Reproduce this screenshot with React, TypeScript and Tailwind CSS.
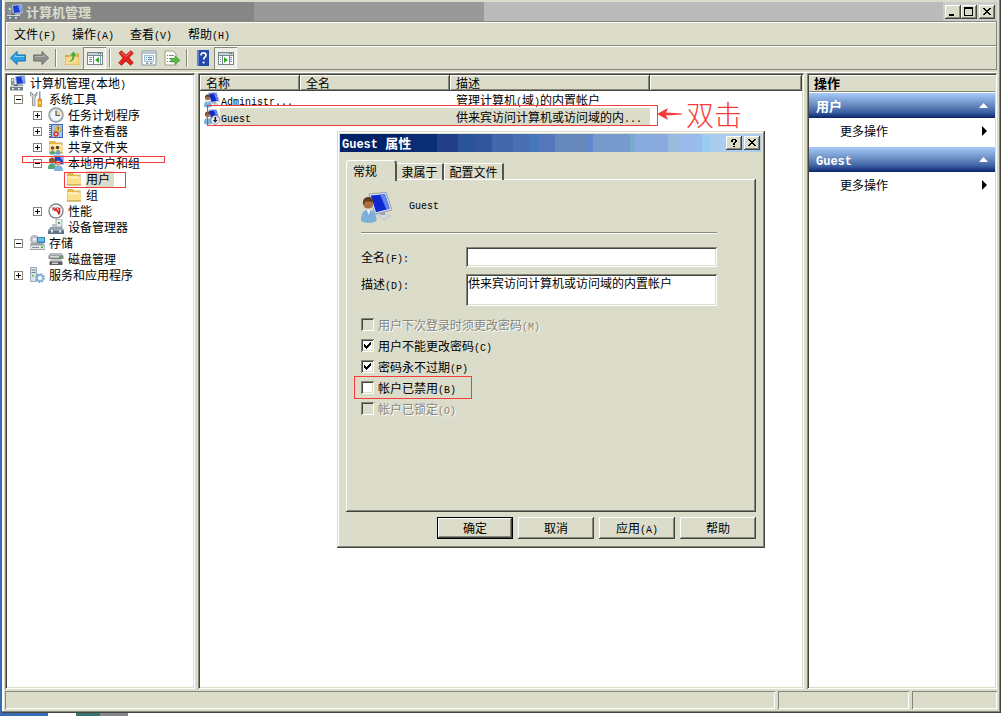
import type { ReactNode } from "react";

const sunken =
  "shadow-[inset_1px_1px_#868679,inset_-1px_-1px_#ffffff,inset_2px_2px_#45453f,inset_-2px_-2px_#dcdcca]";
const raised =
  "shadow-[inset_-1px_-1px_#45453f,inset_1px_1px_#ffffff,inset_-2px_-2px_#868679]";
const thinSunken = "shadow-[inset_1px_1px_#868679,inset_-1px_-1px_#ffffff]";

// Latin runs take half the width of a Chinese character, as in the system font
const T = ({ children, bold = false }: { children: string; bold?: boolean }) => (
  <>
    {children.split(/([\x20-\x7e]+)/).map((part, i) =>
      i % 2 === 1 ? (
        <span
          key={i}
          className={`leading-none whitespace-pre font-['Liberation_Mono','Noto_Sans_CJK_SC',monospace] ${
            bold ? "text-[12px]" : "text-[10px]"
          }`}
        >
          {part}
        </span>
      ) : (
        part
      )
    )}
  </>
);

const Icon = ({ children, className = "size-4" }: { children: ReactNode; className?: string }) => (
  <svg viewBox="0 0 16 16" className={`shrink-0 ${className}`} aria-hidden="true">
    {children}
  </svg>
);

const ComputerIcon = () => (
  <Icon>
    <path d="M5 1l10-1 .8 9L6 10.500z" fill="#b3bfd0" />
    <path d="M6 2l8-1 .7 7L7 9z" fill="#1b3fd0" />
    <path d="M11 1.400l3-.4.7 7-1.500.2z" fill="#7fa8f4" />
    <path d="M1 3h3.500v7.500H1z" fill="#8a949d" />
    <path d="M2 4h1.500v2H2z" fill="#e8eef2" />
    <path d="M8 9h4l2 2H7z" fill="#aab2bb" />
    <path d="M0 11h13v4.500H0z" fill="#6f7f8a" />
    <path d="M0 11h13v1H0z" fill="#d2dade" />
    <path d="M2 13h2v1.500H2zM8 13h2v1.500H8z" fill="#e9eef0" />
    <path d="M4 9.500h4V11H4z" fill="#55626c" />
  </Icon>
);

const ToolsIcon = () => (
  <Icon>
    <path
      d="M1.500 1v3l2 2v8.500h2.500V6l2-2V1L6.500 2.500v1.500h-3V2.500z"
      fill="#d8dcde"
      stroke="#7b8388"
      strokeWidth=".8"
    />
    <path d="M10 .5h1.500V8H10z" fill="#8c9498" />
    <path d="M9 8h3.500v7a1 1 0 0 1-1 1H10a1 1 0 0 1-1-1z" fill="#f1a81e" stroke="#b46c10" strokeWidth=".6" />
    <path d="M9.300 11h3v1.500h-3z" fill="#fce08a" />
  </Icon>
);

const ClockIcon = () => (
  <Icon>
    <circle cx="8" cy="8" r="7.700" fill="#8d949c" />
    <circle cx="8" cy="8" r="6.500" fill="#c8dbe9" />
    <circle cx="8" cy="8" r="5.300" fill="#f4f8fb" />
    <path d="M8 8V3a5 5 0 0 1 5 5z" fill="#f8d48e" />
    <path d="M8 3.500V8.500h4" fill="none" stroke="#3b5e86" strokeWidth="1.200" />
  </Icon>
);

const EventIcon = () => (
  <Icon>
    <path d="M3 1h12v14H3z" fill="#3b66b8" />
    <path d="M4 2h10v12H4z" fill="#a9c4ec" />
    <path d="M1 1h3v14H1z" fill="#5a6880" />
    <path d="M1 2h2v1H1zm0 2h2v1H1zm0 2h2v1H1zm0 2h2v1H1zm0 2h2v1H1zm0 2h2v1H1z" fill="#e0e6f0" />
    <path d="M10 2l3.500 6h-7z" fill="#fcd22c" stroke="#b88a10" strokeWidth=".6" />
    <path d="M9.700 4h.8v3h-.8z" fill="#222" />
    <circle cx="8" cy="11" r="2.700" fill="#d83a36" />
    <circle cx="8" cy="11" r="1" fill="#fff" />
  </Icon>
);

const FolderShape = () => (
  <>
    <path d="M1 3l1-1h5l1 1.500h6.500V14H1z" fill="#e3b74c" />
    <path d="M1.500 5h13v9h-13z" fill="#fbdf8c" />
    <path d="M2 5.500h12v2H2z" fill="#fdf0bd" />
    <path d="M1 13.500h14v1H1z" fill="#b98d2a" />
    <path d="M13 3.500h1.500V6H13z" fill="#a9c5e6" />
  </>
);

const FolderIcon = () => (
  <Icon>
    <FolderShape />
  </Icon>
);

const SharedFolderIcon = () => (
  <Icon>
    <FolderShape />
    <circle cx="4.500" cy="9" r="1.700" fill="#6b4a30" />
    <circle cx="9.500" cy="8.500" r="1.700" fill="#5e3c24" />
    <path d="M2 15.500c0-3 1-4 2.500-4s2.500 1 2.500 4z" fill="#4ea68b" />
    <path d="M7.500 15.500c0-3 1-4.500 2.500-4.500s2.500 1.500 2.500 4.500z" fill="#5fa1d2" />
  </Icon>
);

const UsersIcon = () => (
  <Icon>
    <path d="M6 0h10v10H6z" fill="#b9c6da" />
    <path d="M7 1h8v8H7z" fill="#1f46cb" />
    <path d="M11 1h4v5z" fill="#7ea7f2" />
    <circle cx="4" cy="5.500" r="3" fill="#8b5a35" />
    <circle cx="10" cy="8" r="2.600" fill="#d5a06f" />
    <path d="M0 14c0-4 1.500-5.500 4-5.500S8 10 8 14z" fill="#54a878" />
    <path d="M6 16c0-4 1.500-5.500 4.500-5.500S15 12 15 16z" fill="#7fb2dc" />
  </Icon>
);

const PerfIcon = () => (
  <Icon>
    <circle cx="8" cy="8" r="7.700" fill="#7e868c" />
    <circle cx="8" cy="8" r="6.300" fill="#fff" />
    <path d="M4 8l2-4 5 .5" fill="none" stroke="#9aa" strokeWidth=".8" />
    <path d="M4.500 4.500l3 3.500M7.500 5l4 6.500M10 5.500h1.500V10" fill="none" stroke="#d8201c" strokeWidth="1.600" />
  </Icon>
);

const DeviceIcon = () => (
  <Icon>
    <path d="M8 0h6v8H8z" fill="#e6ebee" stroke="#8b959b" strokeWidth=".7" />
    <path d="M10 3h2v2h-2z" fill="#4cab3e" />
    <path d="M4 5h5v3H4z" fill="#b9c4ca" />
    <path d="M2 8h12l1.500 3H.5z" fill="#93a4ae" />
    <path d="M0 10.500h16V15H0z" fill="#5c7482" />
    <path d="M0 10.500h16v1H0z" fill="#b8c8d0" />
    <path d="M3 11h2v2.500H3zm8 0h2v2.500h-2z" fill="#dfe7ea" />
  </Icon>
);

const StorageIcon = () => (
  <Icon>
    <circle cx="5.500" cy="4.500" r="4" fill="#c5cbd0" stroke="#8b9298" strokeWidth=".7" />
    <circle cx="5.500" cy="4.500" r="1.200" fill="#fff" />
    <path d="M8 2h8v6H8z" fill="#3f86bb" />
    <path d="M9 3h6v3.500H9z" fill="#64bfe6" />
    <path d="M2 8h12l2 2v5H1v-5z" fill="#9aa3a8" />
    <path d="M1.500 10.500h14V14h-14z" fill="#e5e8ea" />
    <path d="M12 11.500h2v1.500h-2z" fill="#39a935" />
    <path d="M3 12h7v1H3z" fill="#889198" />
  </Icon>
);

const DiskIcon = () => (
  <Icon>
    <path d="M2 2h12l1.500 3H.5z" fill="#b8bcbe" />
    <path d="M.5 4.500h15V8H.5z" fill="#85898c" />
    <path d="M2 5h9v1.500H2z" fill="#d9dcdd" />
    <path d="M12 5h2v1.500h-2z" fill="#42b13b" />
    <path d="M3 8h10l1.500 3h-13z" fill="#c2c6c8" />
    <path d="M1.500 10.500h13V14h-13z" fill="#585e61" />
    <path d="M4 11.500h6V13H4z" fill="#cfd3d4" />
  </Icon>
);

const ServicesIcon = () => (
  <Icon>
    <path d="M1 0h7v15H1z" fill="#9fb0ba" />
    <path d="M2 1h5v13H2z" fill="#d8e2e7" />
    <path d="M2.500 2.500h4v1h-4zm0 2.500h4v1h-4z" fill="#6e818c" />
    <path d="M3 8h1.500v1.500H3z" fill="#48ab3f" />
    <circle cx="11" cy="11" r="3" fill="none" stroke="#8fb3d6" strokeWidth="1.800" />
    <circle cx="11" cy="11" r="4.300" fill="none" stroke="#6f9cc6" strokeWidth="1.200" strokeDasharray="1.700 1.680" />
  </Icon>
);

const UserIcon = ({ disabled = false, className = "size-4" }: { disabled?: boolean; className?: string }) => (
  <Icon className={className}>
    <path d="M7.500 11l3.500-.5 4 1.500-3.500 2z" fill="#d3d9df" stroke="#a9b2bb" strokeWidth=".3" />
    <path d="M9.500 9.500h2.500v2h-2.500z" fill="#9ba6b1" />
    <path d="M4 1l8.500-.8L15.500 9l-8.500 2z" fill="#dfe5ec" stroke="#93a0b0" strokeWidth=".5" />
    <path d="M4.900 1.700l7.100-.6L14.400 8.400l-6.900 1.700z" fill="#0d28cf" />
    <path d="M9.500 1.300l2.500-.2 2.400 7.300-1.700.4z" fill="#5f86f0" />
    <circle cx="3.600" cy="5.800" r="2.500" fill="#a8703f" />
    <path d="M1 6.500c-.3-3 1-4 2.700-4 1.600 0 2.500 1 2.400 2.500-1.600-.2-2.800-.6-3.600-.3C1.700 5 1.800 6 1 6.500z" fill="#5d3a1e" />
    <path d="M0 14.500C0 10.500 1.200 9 3.700 9s4.100 1.500 4.100 5.500c-2 1.300-5.800 1.300-7.800 0z" fill="#7db0d8" />
    <path d="M2.800 8.800h2l-.9 2.700z" fill="#e9f4fb" />
    {disabled && (
      <>
        <circle cx="11.300" cy="11" r="4.400" fill="#e6e9ee" stroke="#7e8894" strokeWidth=".8" />
        <path d="M10.500 8h1.600v3h1.500l-2.300 2.800L9 11h1.500z" fill="#1c2430" />
      </>
    )}
  </Icon>
);

const Arrow = ({ forward = false }: { forward?: boolean }) => (
  <Icon>
    <path
      d={forward ? "M15.500 8L9 1.500V5H.7v6H9v3.500z" : "M.5 8L7 1.500V5h8.300v6H7v3.500z"}
      fill={forward ? "#8f8f8f" : "#2da4e2"}
      stroke={forward ? "#6b6b6b" : "#1a66b0"}
      strokeWidth="1"
    />
    <path d={forward ? "M2 6h8V4.500L12 7H2z" : "M14 6H6V4.500L4 7h10z"} fill={forward ? "#b4b4b4" : "#85d4f8"} />
  </Icon>
);

const UpFolderIcon = () => (
  <Icon>
    <path d="M1 5h5l1-1.500h8V15H1z" fill="#dba93f" />
    <path d="M1.500 7h13v7.500h-13z" fill="#fad988" />
    <path d="M3 12c4-1 5-3 5-6H5.500L9.500 1 13 6h-2.200c0 4-3 6.500-7.800 6z" fill="#3fae31" stroke="#fff" strokeWidth=".4" />
  </Icon>
);

const PaneIcon = ({ right = false }: { right?: boolean }) => (
  <Icon>
    <g shapeRendering="crispEdges">
      <path d="M0 2h16v13H0z" fill="#7b858c" />
      <path d="M1 3h14v2H1z" fill="#c6d2da" />
      <path d="M11 3h1v1h-1zM13 3h1v1h-1z" fill="#4f6675" />
      <path
        d={right ? "M1 6h3v8H1zM5 6h6v8H5zM12 6h3v8h-3z" : "M1 6h5v8H1zM7 6h8v8H7z"}
        fill="#fff"
      />
      <path
        d={
          right
            ? "M12 7h2v1h-2zm0 2h2v1h-2zm0 2h2v1h-2zM2 7h1v1H2zm0 2h1v1H2zm0 2h1v1H2z"
            : "M2 7h3v1H2zm0 2h3v1H2zm0 2h3v1H2zM13 6h1v8h-1z"
        }
        fill="#7194ad"
      />
    </g>
    <path d={right ? "M6 7v6l4-3z" : "M12 7v6L8 10z"} fill="#35a52c" />
  </Icon>
);

const DeleteIcon = () => (
  <Icon>
    <path
      d="M1 3l2.500-2.200L8 5 12.800.8 15.300 3 11 7.800l4.300 5-2.800 2.400L8 11l-4.500 4.300L.7 13 5 8z"
      fill="#e5221d"
      stroke="#a81410"
      strokeWidth=".7"
    />
    <path d="M3.500 2.500L8 6.500l4.500-4" fill="none" stroke="#f5857c" strokeWidth=".9" />
  </Icon>
);

const PropertiesIcon = () => (
  <Icon>
    <path d="M1 1h14v14H1z" fill="#fff" stroke="#8093a0" strokeWidth="1" />
    <path d="M2 2h12v2H2z" fill="#b7c7d2" />
    <path d="M3.500 5.500h9v6h-9z" fill="#eef4f7" stroke="#8facc0" strokeWidth=".8" />
    <path d="M5 7h1v1H5zm2 0h4v1H7zM5 9h1v1H5zm2 0h4v1H7z" fill="#4f8bb8" />
    <path d="M5 12.500h2.500V14H5zm4 0h2.500V14H9z" fill="#7e99ab" />
  </Icon>
);

const ExportIcon = () => (
  <Icon>
    <path d="M1 1h8l3 3v11H1z" fill="#fdfdf6" stroke="#99917a" strokeWidth=".9" />
    <path d="M3 5h1v1H3zm2 0h5v1H5zM3 8h1v1H3zm2 0h4v1H5zm-2 3h1v1H3zm2 0h4v1H5z" fill="#6b8aa0" />
    <path d="M7 8.500h4V6l5 4.300-5 4.200V12H7z" fill="#54bd3e" stroke="#2f8d25" strokeWidth=".6" />
  </Icon>
);

const HelpIcon = () => (
  <Icon>
    <path d="M2 0h12v16H2z" fill="#2248a8" />
    <path d="M2 0h2v16H2z" fill="#5c82d6" />
    <path
      d="M6 5.500c0-2 1-2.700 2.500-2.700S11 3.600 11 5.200C11 7.200 8.600 7 8.600 9.500"
      fill="none"
      stroke="#fff"
      strokeWidth="1.700"
    />
    <circle cx="8.600" cy="12.500" r="1.100" fill="#fff" />
  </Icon>
);

const ToolButton = ({ label, on = false, children }: { label: string; on?: boolean; children: ReactNode }) => (
  <button
    type="button"
    aria-label={label}
    className={`flex h-[22px] w-[23px] items-center justify-center ${on ? `bg-[#eeeee4] ${thinSunken}` : ""}`}
  >
    {children}
  </button>
);

const Separator = () => <div className="mx-[3px] h-[18px] w-0.5 border-l border-[#868679] bg-white" />;

const CaptionButton = ({ label, children }: { label: string; children: ReactNode }) => (
  <button
    type="button"
    aria-label={label}
    className={`flex h-[14px] w-4 items-center justify-center bg-[#dcdcca] ${raised}`}
  >
    <svg viewBox="0 0 10 10" className="size-[10px]" shapeRendering="crispEdges">
      {children}
    </svg>
  </button>
);

const Cross = () => (
  <path
    d="M1 1h2v1H1zM7 1h2v1H7zM2 2h2v1H2zM6 2h2v1H6zM3 3h4v1H3zM4 4h2v1H4zM3 5h4v1H3zM2 6h2v1H2zM6 6h2v1H6zM1 7h2v1H1zM7 7h2v1H7z"
    fill="#000"
  />
);

type Node = { label: string; depth: 0 | 1 | 2 | 3; icon: ReactNode; state?: "open" | "closed"; selected?: boolean };

const nodes: Node[] = [
  { label: "计算机管理(本地)", depth: 0, icon: <ComputerIcon /> },
  { label: "系统工具", depth: 1, icon: <ToolsIcon />, state: "open" },
  { label: "任务计划程序", depth: 2, icon: <ClockIcon />, state: "closed" },
  { label: "事件查看器", depth: 2, icon: <EventIcon />, state: "closed" },
  { label: "共享文件夹", depth: 2, icon: <SharedFolderIcon />, state: "closed" },
  { label: "本地用户和组", depth: 2, icon: <UsersIcon />, state: "open" },
  { label: "用户", depth: 3, icon: <FolderIcon />, selected: true },
  { label: "组", depth: 3, icon: <FolderIcon /> },
  { label: "性能", depth: 2, icon: <PerfIcon />, state: "closed" },
  { label: "设备管理器", depth: 2, icon: <DeviceIcon /> },
  { label: "存储", depth: 1, icon: <StorageIcon />, state: "open" },
  { label: "磁盘管理", depth: 2, icon: <DiskIcon /> },
  { label: "服务和应用程序", depth: 1, icon: <ServicesIcon />, state: "closed" },
];

const indents = ["pl-[3px]", "pl-[7px]", "pl-[26px]", "pl-[59px]"];

const TreeRow = ({ node }: { node: Node }) => (
  <li className={`flex h-4 items-center whitespace-nowrap ${indents[node.depth]}`}>
    {node.state && (
      <button type="button" aria-label={node.label} className="mr-1.5 size-[9px] shrink-0">
        <svg viewBox="0 0 9 9" className="size-[9px]" shapeRendering="crispEdges">
          <path d="M0 0h9v9H0z" fill="#868679" />
          <path d="M1 1h7v7H1z" fill="#fff" />
          <path d={node.state === "open" ? "M2 4h5v1H2z" : "M2 4h5v1H2zM4 2h1v5H4z"} fill="#000" />
        </svg>
      </button>
    )}
    {!node.state && node.depth === 2 && <span className="mr-1.5 w-[9px] shrink-0" />}
    {node.icon}
    <span className={`ml-1 ${node.selected ? "bg-[#dcdcca] pr-1" : ""}`}>
      <T>{node.label}</T>
    </span>
  </li>
);

const users = [
  { name: "Administr...", description: "管理计算机(域)的内置帐户", selected: false },
  { name: "Guest", description: "供来宾访问计算机或访问域的内...", selected: true },
];

const columns = ["名称", "全名", "描述", ""];

const UserTable = () => (
  <table className="w-full table-fixed border-collapse">
    <colgroup>
      <col className="w-[100px]" />
      <col className="w-[150px]" />
      <col className="w-[200px]" />
      <col />
    </colgroup>
    <thead>
      <tr>
        {columns.map((name, i) => (
          <th key={i} className={`h-4 bg-[#dcdcca] p-0 pl-1.5 text-left font-normal ${raised}`}>
            {name}
          </th>
        ))}
      </tr>
    </thead>
    <tbody>
      {users.map((user) => {
        const fill = user.selected ? "bg-[#dcdcca]" : "";
        return (
          <tr key={user.name}>
            <td className="h-[17px] p-0 pl-1">
              <div className="flex h-[17px] items-center">
                <UserIcon disabled={user.selected} />
                <div className={`h-[17px] flex-1 pl-px leading-[17px] ${fill}`}>
                  <T>{user.name}</T>
                </div>
              </div>
            </td>
            <td className={`p-0 ${fill}`} />
            <td className={`p-0 pl-1.5 whitespace-nowrap ${fill}`}>
              <T>{user.description}</T>
            </td>
            <td className="p-0" />
          </tr>
        );
      })}
    </tbody>
  </table>
);

const ActionGroup = ({ title }: { title: string }) => (
  <section>
    <button
      type="button"
      className="flex h-[25px] w-full items-center justify-between bg-[linear-gradient(#a6caf8,#87aade_25%,#6688bb_50%,#3f62a6_75%,#0a246a)] pr-[7px] pl-[7px] font-bold text-white"
    >
      <span className="text-[13px]">
        <T bold>{title}</T>
      </span>
      <svg viewBox="0 0 9 5" className="h-[5px] w-[9px]" aria-hidden="true">
        <path d="M4.500 0L9 5H0z" fill="#fff" />
      </svg>
    </button>
    <button type="button" className="flex h-[25px] w-full items-center justify-between pr-2 pl-[31px]">
      更多操作
      <svg viewBox="0 0 5 10" className="h-[10px] w-[5px]" aria-hidden="true">
        <path d="M0 0l5 5-5 5z" fill="#000" />
      </svg>
    </button>
  </section>
);

const options = [
  { label: "用户下次登录时须更改密码(M)", checked: false, disabled: true },
  { label: "用户不能更改密码(C)", checked: true, disabled: false },
  { label: "密码永不过期(P)", checked: true, disabled: false },
  { label: "帐户已禁用(B)", checked: false, disabled: false },
  { label: "帐户已锁定(O)", checked: false, disabled: true },
];

const Option = ({ label, checked, disabled }: { label: string; checked: boolean; disabled: boolean }) => (
  <label
    className={`flex h-[21px] w-fit items-center gap-1 ${
      disabled ? "text-[#868679] [text-shadow:1px_1px_#ffffff]" : ""
    }`}
  >
    <span className="grid size-[13px]">
      <input
        type="checkbox"
        defaultChecked={checked}
        disabled={disabled}
        className={`peer col-start-1 row-start-1 size-[13px] appearance-none ${sunken} ${
          disabled ? "bg-[#dcdcca]" : "bg-white"
        }`}
      />
      <svg
        viewBox="0 0 13 13"
        className="pointer-events-none invisible col-start-1 row-start-1 size-[13px] peer-checked:visible"
        shapeRendering="crispEdges"
      >
        <path d="M3 5h1v3H3zM4 6h1v3H4zM5 7h1v3H5zM6 6h1v3H6zM7 5h1v3H7zM8 4h1v3H8zM9 3h1v3H9z" fill="#000" />
      </svg>
    </span>
    <span>
      <T>{label}</T>
    </span>
  </label>
);

const DialogButton = ({ label, primary = false }: { label: string; primary?: boolean }) => (
  <button
    type="button"
    className={`h-[22px] w-[76px] ${primary ? "border border-black" : ""} ${raised}`}
  >
    <T>{label}</T>
  </button>
);

const PropertiesDialog = () => (
  <div
    role="dialog"
    aria-label="Guest 属性"
    className="absolute top-[131px] left-[337px] flex w-[428px] flex-col bg-[#dcdcca] p-[3px] pb-[9px] shadow-[inset_-1px_-1px_#45453f,inset_1px_1px_#dcdcca,inset_-2px_-2px_#868679,inset_2px_2px_#ffffff]"
  >
    <div className="mr-px flex h-[18px] items-center bg-[linear-gradient(90deg,#002266_0_15%,#0a2d76_15%_23%,#223f88_23%_28%,#2a5599_28%_32%,#3355a0_32%_36%,#4466aa_36%_41%,#4a6fb4_41%_45%,#4477bb_45%_47%,#5577bb_47%_51%,#6688bb_51%_59%,#5f88cc_59%_60%,#7799cc_60%_69%,#77aacc_69%_70%,#88aadd_70%_78%,#99bbdd_78%_81%,#99bbee_81%_86%,#99ccee_86%_88%,#aaccee_88%)] pr-px pl-0.5 text-white">
      <span className="flex-1 text-[13px] font-bold">
        <T bold>Guest 属性</T>
      </span>
      <div className="flex gap-0.5">
        <CaptionButton label="帮助">
          <path d="M3 1h4v1H3zM2 2h2v2H2zM6 2h2v2H6zM5 4h2v1H5zM4 5h2v2H4zM4 8h2v1H4z" fill="#000" />
        </CaptionButton>
        <CaptionButton label="关闭">
          <Cross />
        </CaptionButton>
      </div>
    </div>

    <div className="px-1.5 pt-2">
      <div role="tablist" className="flex items-end">
        <button
          type="button"
          role="tab"
          aria-selected="true"
          className="relative z-10 -mb-px h-[21px] w-[51px] rounded-t-sm border-t border-r-2 border-l border-t-white border-r-[#55554c] border-l-white bg-[#dcdcca] pr-3"
        >
          常规
        </button>
        <button
          type="button"
          role="tab"
          aria-selected="false"
          className="h-[17px] w-[47px] border-t border-r-2 border-t-white border-r-[#55554c]"
        >
          隶属于
        </button>
        <button
          type="button"
          role="tab"
          aria-selected="false"
          className="h-[17px] w-[60px] border-t border-r-2 border-l border-t-white border-r-[#55554c] border-l-white"
        >
          配置文件
        </button>
      </div>

      <div role="tabpanel" className={`-mt-px h-[333px] pt-[13px] pr-[39px] pl-[15px] ${raised}`}>
        <div className="flex h-[41px] items-start gap-4 border-b border-[#868679] shadow-[0_1px_#ffffff]">
          <UserIcon className="size-8" />
          <span className="pt-1">
            <T>Guest</T>
          </span>
        </div>

        <div className="mt-[14px] flex items-start">
          <label htmlFor="full-name" className="w-[105px] pt-0.5">
            <T>全名(F):</T>
          </label>
          <input id="full-name" type="text" className={`h-5 flex-1 bg-white px-[3px] ${sunken}`} />
        </div>
        <div className="mt-[7px] flex items-start">
          <label htmlFor="description" className="w-[105px] pt-0.5">
            <T>描述(D):</T>
          </label>
          <textarea
            id="description"
            defaultValue="供来宾访问计算机或访问域的内置帐户"
            className={`h-8 flex-1 resize-none overflow-hidden bg-white px-0.5 py-px leading-4 ${sunken}`}
          />
        </div>

        <div className="mt-2">
          {options.map((option) => (
            <Option key={option.label} {...option} />
          ))}
        </div>
      </div>

      <div className="mt-[5px] flex justify-end gap-[5px]">
        <DialogButton label="确定" primary />
        <DialogButton label="取消" />
        <DialogButton label="应用(A)" />
        <DialogButton label="帮助" />
      </div>
    </div>
  </div>
);

// Red marks drawn over the window to point out the steps
const Annotations = () => (
  <div className="pointer-events-none text-[#f93a3a]">
    <div className="absolute top-[156px] left-[22px] h-[7px] w-[143px] border border-current" />
    <div className="absolute top-[172px] left-[64px] h-4 w-[62px] border border-current" />
    <div className="absolute top-[105px] left-[207px] h-[21px] w-[451px] border border-current" />
    <div className="absolute top-[376px] left-[354px] h-[23px] w-[118px] border border-current" />
    <div className="absolute top-[94px] left-[657px] flex h-10 items-center gap-1 text-[28px] leading-10 font-light">
      <svg viewBox="0 0 25 12" className="h-3 w-[25px]" aria-hidden="true">
        <path d="M0 6l11-6-2 4.500L25 5.500v1L9 7.500 11 12z" fill="currentColor" />
      </svg>
      双击
    </div>
  </div>
);

const menus = ["文件(F)", "操作(A)", "查看(V)", "帮助(H)"];

export default function App() {
  return (
    <div className="relative flex h-screen flex-col overflow-hidden bg-[#3a6ab5] font-['Noto_Sans_CJK_SC',sans-serif] text-[12px] leading-4 text-black">
      <div className="ml-0.5 flex min-h-0 flex-1 flex-col bg-[#dcdcca] pt-0.5 pr-1 pb-1 pl-[3px] shadow-[inset_-1px_-1px_#45453f,inset_-2px_-2px_#868679,inset_2px_0_#ffffff]">
        <header className="flex h-[19px] items-center bg-[linear-gradient(90deg,#868686_0_249px,#999999_249px_479px,#bbbbbb_479px)] pl-0.5">
          <ComputerIcon />
          <h1 className="ml-[3px] flex-1 text-[13px] font-bold text-[#dcdcca]">计算机管理</h1>
          <div className="flex h-full items-center bg-[#cccccc] pr-0.5 pl-0.5">
            <CaptionButton label="最小化">
              <path d="M1 7h5v2H1z" fill="#000" />
            </CaptionButton>
            <CaptionButton label="最大化">
              <path d="M0 0h9v9H0zM1 2v6h7V2z" fill="#000" fillRule="evenodd" />
            </CaptionButton>
            <span className="w-0.5" />
            <CaptionButton label="关闭">
              <Cross />
            </CaptionButton>
          </div>
        </header>

        <nav className="flex h-6 items-center border border-b-0 border-[#868679] shadow-[inset_1px_1px_#ffffff]">
          {menus.map((menu) => (
            <button key={menu} type="button" className="w-[58px]">
              <T>{menu}</T>
            </button>
          ))}
        </nav>

        <div className="flex h-[25px] items-center border border-[#868679] shadow-[inset_1px_1px_#ffffff]">
          <ToolButton label="后退">
            <Arrow />
          </ToolButton>
          <ToolButton label="前进">
            <Arrow forward />
          </ToolButton>
          <Separator />
          <ToolButton label="上一级">
            <UpFolderIcon />
          </ToolButton>
          <ToolButton label="显示/隐藏控制台树" on>
            <PaneIcon />
          </ToolButton>
          <Separator />
          <ToolButton label="删除">
            <DeleteIcon />
          </ToolButton>
          <ToolButton label="属性">
            <PropertiesIcon />
          </ToolButton>
          <ToolButton label="导出列表">
            <ExportIcon />
          </ToolButton>
          <Separator />
          <ToolButton label="帮助">
            <HelpIcon />
          </ToolButton>
          <ToolButton label="显示/隐藏操作窗格" on>
            <PaneIcon right />
          </ToolButton>
        </div>

        <main className="mt-0.5 flex min-h-0 flex-1 gap-[3px] border-t border-white">
          <ul className={`w-[190px] shrink-0 bg-white p-0.5 ${sunken}`}>
            {nodes.map((node) => (
              <TreeRow key={node.label} node={node} />
            ))}
          </ul>

          <div className={`min-w-0 flex-1 bg-white p-0.5 ${sunken}`}>
            <UserTable />
          </div>

          <aside className={`w-[190px] shrink-0 bg-white p-0.5 ${sunken}`}>
            <h2 className="mb-px h-[17px] border-b border-[#868679] bg-[#dcdcca] pl-[5px] text-[13px] font-bold shadow-[inset_0_1px_#ffffff]">
              操作
            </h2>
            <div className="flex flex-col gap-1">
              <ActionGroup title="用户" />
              <ActionGroup title="Guest" />
            </div>
          </aside>
        </main>

        <footer className="mt-0.5 flex h-[18px] gap-[3px]">
          <div className={`flex-1 ${thinSunken}`} />
          <div className={`w-[131px] ${thinSunken}`} />
          <div className={`w-[85px] ${thinSunken}`} />
        </footer>
      </div>

      <div className="flex h-[3px] shrink-0">
        <div className="w-12" />
        <div className="w-7 bg-white" />
        <div className="w-6 bg-[#37726f]" />
        <div className="w-7 bg-[#85898f]" />
        <div className="flex-1 bg-white" />
      </div>

      <PropertiesDialog />
      <Annotations />
    </div>
  );
}
